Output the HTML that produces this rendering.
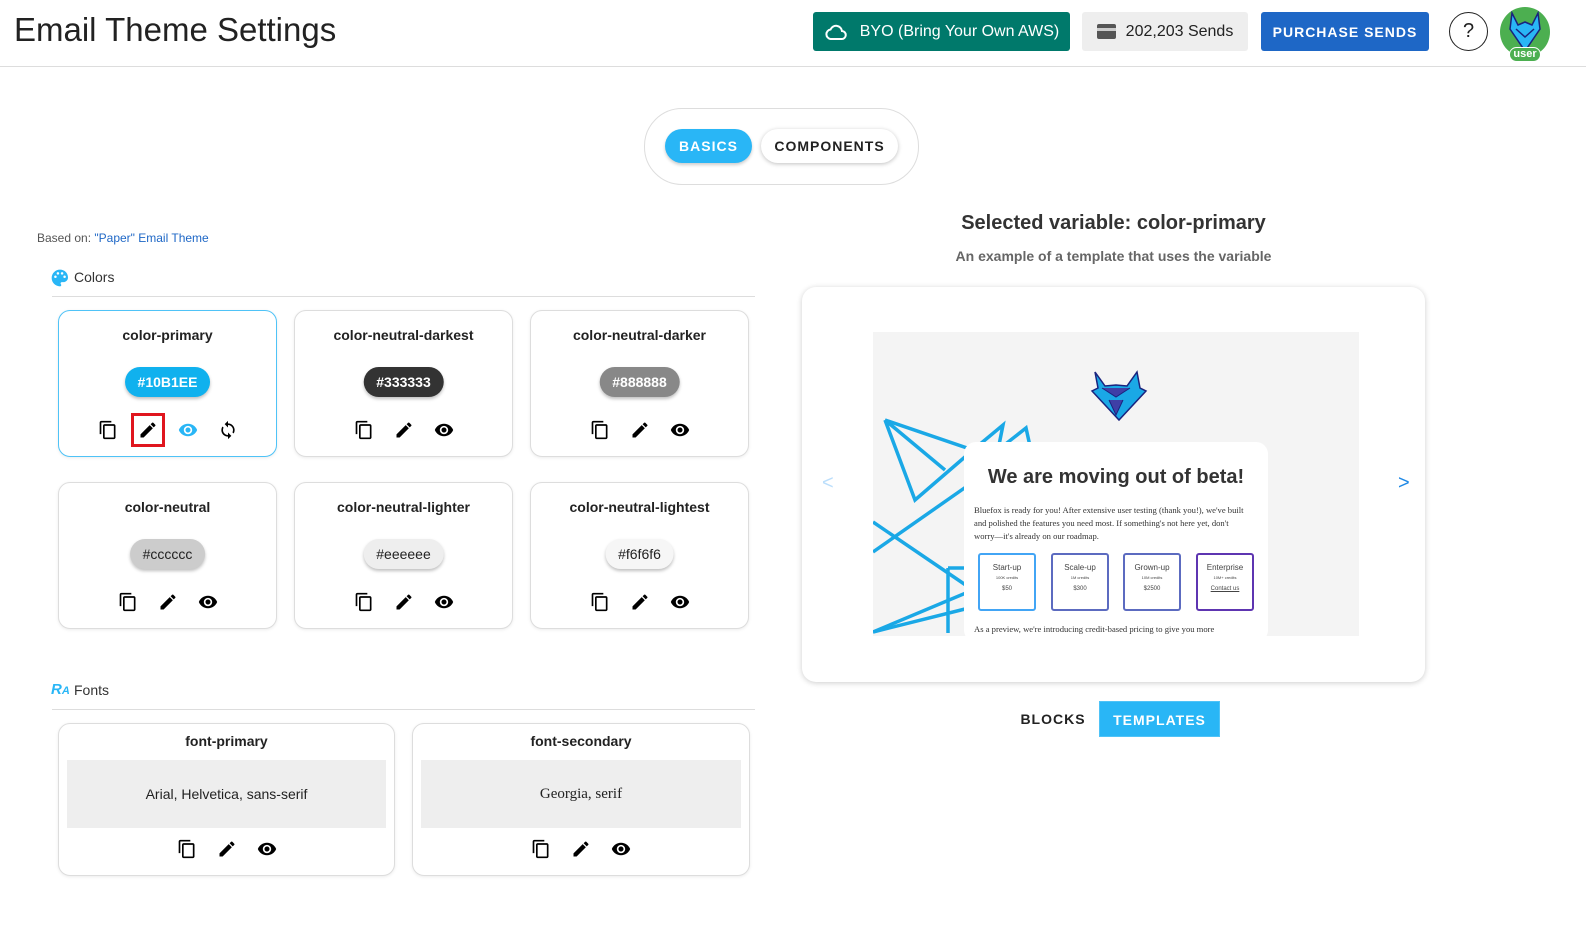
<!DOCTYPE html>
<html><head><meta charset="utf-8"><style>
*{box-sizing:border-box;margin:0;padding:0}
html,body{overflow:hidden}
body{width:1586px;height:932px;background:#fff;font-family:"Liberation Sans",Roboto,sans-serif;color:#222;position:relative}
.a{position:absolute}
.card{position:absolute;border:1px solid #ddd;border-radius:12px;background:#fff;box-shadow:0 1px 3px rgba(0,0,0,.08)}
.card .t{position:absolute;top:16px;left:0;right:0;text-align:center;font-weight:bold;font-size:14px;color:#222}
.chip{position:absolute;top:56px;left:50%;transform:translateX(-50%);height:30px;line-height:30px;padding:0 13px;border-radius:15px;font-size:14px;font-weight:bold;box-shadow:0 2px 3px rgba(0,0,0,.25)}
.icons{position:absolute;top:109px;left:0;right:0;display:flex;justify-content:center;gap:20px}
.icons svg{width:20px;height:20px}
.btn{position:absolute;top:12px;height:39px;border-radius:3px;font-size:16px;display:flex;align-items:center;justify-content:center}
</style></head><body>
<svg width="0" height="0" style="position:absolute"><defs>
<symbol id="cp" viewBox="0 0 24 24"><path d="M16 1H4c-1.1 0-2 .9-2 2v14h2V3h12V1zm3 4H8c-1.1 0-2 .9-2 2v14c0 1.1.9 2 2 2h11c1.1 0 2-.9 2-2V7c0-1.1-.9-2-2-2zm0 16H8V7h11v14z"/></symbol>
<symbol id="ed" viewBox="0 0 24 24"><path d="M3 17.25V21h3.75L17.81 9.94l-3.75-3.75L3 17.25zM20.71 7.04a1 1 0 000-1.41l-2.34-2.34a1 1 0 00-1.41 0l-1.830 1.83 3.75 3.75 1.83-1.83z"/></symbol>
<symbol id="ey" viewBox="0 0 24 24"><path d="M12 4.5C7 4.5 2.73 7.61 1 12c1.73 4.39 6 7.5 11 7.5s9.27-3.11 11-7.5c-1.730-4.39-6-7.5-11-7.5zM12 17c-2.76 0-5-2.24-5-5s2.24-5 5-5 5 2.24 5 5-2.24 5-5 5zm0-8c-1.66 0-3 1.34-3 3s1.34 3 3 3 3-1.34 3-3-1.34-3-3-3z"/></symbol>
<symbol id="sy" viewBox="0 0 24 24"><path d="M12 4V1L8 5l4 4V6c3.31 0 6 2.69 6 6 0 1.01-.25 1.97-.7 2.8l1.46 1.46A7.93 7.93 0 0020 12c0-4.42-3.58-8-8-8zm0 14c-3.31 0-6-2.69-6-6 0-1.01.25-1.97.7-2.8L5.24 7.74A7.93 7.93 0 004 12c0 4.420 3.58 8 8 8v3l4-4-4-4v3z"/></symbol>
</defs></svg>

<div class="a" style="left:14px;top:11px;font-size:33px;color:#222">Email Theme Settings</div>
<div class="btn" style="left:813px;width:257px;background:#00796b;color:#fff"><svg width="24" height="24" viewBox="0 0 24 24" style="margin-right:12px"><path fill="none" stroke="#fff" stroke-width="2" d="M6.5 19h11a4 4 0 00.5-8 6 6 0 00-11.5-1.5A4.8 4.8 0 006.5 19z"/></svg>BYO (Bring Your Own AWS)</div>
<div class="btn" style="left:1082px;width:166px;background:#eee;color:#222"><span style="display:inline-block;width:19px;height:15px;background:#555;border-radius:2px;margin-right:10px;border-top:4px solid #555;box-shadow:inset 0 3px 0 #ccc"></span>202,203 Sends</div>
<div class="btn" style="left:1261px;width:168px;background:#1e67c6;color:#fff;font-weight:bold;font-size:14px;letter-spacing:1px">PURCHASE SENDS</div>
<div class="a" style="left:1449px;top:12px;width:39px;height:39px;border:1.5px solid #222;border-radius:50%;text-align:center;line-height:37px;font-size:20px">?</div>
<div class="a" style="left:1500px;top:7px;width:50px;height:50px;border-radius:50%;background:#4caf50;overflow:hidden">
<svg width="50" height="50" viewBox="0 0 50 50"><path d="M12 6l6 12 7-3 7 3 6-12 2 16-15 22-15-22z" fill="#29b6f6" stroke="#1a237e" stroke-width="1.5"/><path d="M16 22l9 8 9-8" fill="none" stroke="#1a237e" stroke-width="1.5"/></svg></div>
<div class="a" style="left:1509px;top:47px;width:32px;height:15px;background:#4caf50;border:1px solid #fff;border-radius:8px;color:#fff;font-size:11px;font-weight:bold;text-align:center;line-height:13px">user</div>
<div class="a" style="left:0;top:66px;width:1586px;height:1px;background:#ddd"></div>

<div class="a" style="left:644px;top:108px;width:275px;height:77px;border:1px solid #ddd;border-radius:38px"></div>
<div class="a" style="left:665px;top:129px;width:87px;height:34px;border-radius:17px;background:#29b6f6;color:#fff;font-weight:bold;font-size:14px;letter-spacing:1px;text-align:center;line-height:34px;box-shadow:0 2px 3px rgba(0,0,0,.2)">BASICS</div>
<div class="a" style="left:761px;top:129px;width:137px;height:34px;border-radius:17px;background:#fff;color:#222;font-weight:bold;font-size:14px;letter-spacing:1px;text-align:center;line-height:34px;box-shadow:0 1px 4px rgba(0,0,0,.25)">COMPONENTS</div>

<div class="a" style="left:37px;top:231px;font-size:12px;color:#555">Based on: <span style="color:#1e67c6">"Paper" Email Theme</span></div>
<svg class="a" style="left:50px;top:268px" width="20" height="20" viewBox="0 0 24 24"><path fill="#29b6f6" d="M12 2C6.5 2 2 6.5 2 12s4.5 10 10 10c.9 0 1.5-.7 1.5-1.5 0-.4-.2-.8-.4-1-.3-.3-.4-.6-.4-1 0-.9.7-1.5 1.5-1.5H16c3.1 0 5.6-2.5 5.6-5.6C21.6 6 17.3 2 12 2zm-5.5 10a1.5 1.5 0 110-3 1.5 1.5 0 010 3zm3-4a1.5 1.5 0 110-3 1.5 1.5 0 010 3zm5 0a1.5 1.5 0 110-3 1.5 1.5 0 010 3zm3 4a1.5 1.5 0 110-3 1.5 1.5 0 010 3z"/></svg>
<div class="a" style="left:74px;top:269px;font-size:14px;color:#333">Colors</div>
<div class="a" style="left:52px;top:296px;width:703px;height:1px;background:#ddd"></div>

<div class="card" style="left:58px;top:310px;width:219px;height:147px;border-color:#4fc3f7"><div class="t">color-primary</div><div class="chip" style="background:#10b1ee;color:#fff">#10B1EE</div>
<div class="icons"><svg><use href="#cp"/></svg><span style="outline:3px solid #e0161e;outline-offset:4px;display:flex"><svg><use href="#ed"/></svg></span><svg fill="#29b6f6"><use href="#ey"/></svg><svg><use href="#sy"/></svg></div></div>
<div class="card" style="left:294px;top:310px;width:219px;height:147px"><div class="t">color-neutral-darkest</div><div class="chip" style="background:#333;color:#fff">#333333</div><div class="icons"><svg><use href="#cp"/></svg><svg><use href="#ed"/></svg><svg><use href="#ey"/></svg></div></div>
<div class="card" style="left:530px;top:310px;width:219px;height:147px"><div class="t">color-neutral-darker</div><div class="chip" style="background:#888;color:#fff">#888888</div><div class="icons"><svg><use href="#cp"/></svg><svg><use href="#ed"/></svg><svg><use href="#ey"/></svg></div></div>
<div class="card" style="left:58px;top:482px;width:219px;height:147px"><div class="t">color-neutral</div><div class="chip" style="background:#ccc;color:#222;font-weight:normal">#cccccc</div><div class="icons"><svg><use href="#cp"/></svg><svg><use href="#ed"/></svg><svg><use href="#ey"/></svg></div></div>
<div class="card" style="left:294px;top:482px;width:219px;height:147px"><div class="t">color-neutral-lighter</div><div class="chip" style="background:#eee;color:#222;font-weight:normal">#eeeeee</div><div class="icons"><svg><use href="#cp"/></svg><svg><use href="#ed"/></svg><svg><use href="#ey"/></svg></div></div>
<div class="card" style="left:530px;top:482px;width:219px;height:147px"><div class="t">color-neutral-lightest</div><div class="chip" style="background:#f6f6f6;color:#222;font-weight:normal">#f6f6f6</div><div class="icons"><svg><use href="#cp"/></svg><svg><use href="#ed"/></svg><svg><use href="#ey"/></svg></div></div>

<div class="a" style="left:51px;top:681px;font-size:15px;font-weight:bold;font-style:italic;color:#29b6f6">R<span style="font-size:11px">A</span></div>
<div class="a" style="left:74px;top:682px;font-size:14px;color:#333">Fonts</div>
<div class="a" style="left:52px;top:709px;width:703px;height:1px;background:#ddd"></div>
<div class="card" style="left:58px;top:723px;width:337px;height:153px"><div class="t" style="top:9px">font-primary</div><div class="a" style="left:8px;right:8px;top:36px;height:68px;background:#eee;text-align:center;line-height:68px;font-size:14px">Arial, Helvetica, sans-serif</div><div class="icons" style="top:115px"><svg><use href="#cp"/></svg><svg><use href="#ed"/></svg><svg><use href="#ey"/></svg></div></div>
<div class="card" style="left:412px;top:723px;width:338px;height:153px"><div class="t" style="top:9px">font-secondary</div><div class="a" style="left:8px;right:8px;top:36px;height:68px;background:#eee;text-align:center;line-height:68px;font-size:15px;font-family:'Liberation Serif',serif">Georgia, serif</div><div class="icons" style="top:115px"><svg><use href="#cp"/></svg><svg><use href="#ed"/></svg><svg><use href="#ey"/></svg></div></div>

<div class="a" style="left:802px;top:212px;width:623px;text-align:center;font-size:20px;font-weight:bold;color:#333">Selected variable: color-primary</div>
<div class="a" style="left:802px;top:248px;width:623px;text-align:center;font-size:14px;font-weight:bold;color:#666">An example of a template that uses the variable</div>
<div class="a" style="left:802px;top:287px;width:623px;height:395px;border-radius:14px;background:#fff;box-shadow:0 1px 6px rgba(0,0,0,.2)"></div>
<div class="a" style="left:822px;top:472px;color:#bbdefb;font-size:20px">&lt;</div>
<div class="a" style="left:1398px;top:472px;color:#1e88e5;font-size:20px">&gt;</div>
<div class="a" style="left:873px;top:332px;width:486px;height:304px;background:#f4f4f4;overflow:hidden">
<svg class="a" style="left:0;top:0" width="486" height="304" viewBox="0 0 486 304"><g fill="none" stroke="#1aa8e6" stroke-width="3.5"><path d="M12 88l88 30 30-25-5 25 28-22 4 18"/><path d="M12 88l30 80 58-50"/><path d="M12 88l60 50"/><path d="M100 118v140L0 300"/><path d="M100 258L0 190"/><path d="M0 220l100-70"/><path d="M75 236v65M75 236h30M0 300l100-25"/></g>
<path d="M222 40l10 14 11-1 11 1 10-14 3 16 6 3-27 29-27-29 6-3z" fill="#1aa8e6" stroke="#1a237e" stroke-width="1.5"/><path d="M229 56l14 9 14-9M236 68l7 15 7-15" fill="#3f3fa6" stroke="#1a237e" stroke-width="1"/></svg>
<div class="a" style="left:91px;top:110px;width:304px;height:200px;background:#fff;border-radius:12px"></div>
<div class="a" style="left:91px;top:134px;width:304px;text-align:center;font-size:20px;font-weight:bold;color:#333">We are moving out of beta!</div>
<div class="a" style="left:101px;top:172px;width:275px;font-size:8.6px;line-height:13px;font-family:'Liberation Serif',serif;color:#333">Bluefox is ready for you! After extensive user testing (thank you!), we've built and polished the features you need most. If something's not here yet, don't worry—it's already on our roadmap.</div>
<div class="a" style="left:105px;top:221px;width:58px;height:58px;border:2px solid #42a5f5;border-radius:3px;text-align:center;font-size:8px;color:#444;padding-top:8px">Start-up<br><span style="font-size:4px">100K credits</span><br><span style="font-size:6px;line-height:16px">$50</span></div>
<div class="a" style="left:178px;top:221px;width:58px;height:58px;border:2px solid #5c6bc0;border-radius:3px;text-align:center;font-size:8px;color:#444;padding-top:8px">Scale-up<br><span style="font-size:4px">1M credits</span><br><span style="font-size:6px;line-height:16px">$300</span></div>
<div class="a" style="left:250px;top:221px;width:58px;height:58px;border:2px solid #5c6bc0;border-radius:3px;text-align:center;font-size:8px;color:#444;padding-top:8px">Grown-up<br><span style="font-size:4px">10M credits</span><br><span style="font-size:6px;line-height:16px">$2500</span></div>
<div class="a" style="left:323px;top:221px;width:58px;height:58px;border:2px solid #5e35b1;border-radius:3px;text-align:center;font-size:8px;color:#444;padding-top:8px">Enterprise<br><span style="font-size:4px">10M+ credits</span><br><span style="font-size:6px;line-height:16px;text-decoration:underline">Contact us</span></div>
<div class="a" style="left:101px;top:292px;width:300px;font-size:8.6px;font-family:'Liberation Serif',serif;color:#333;white-space:nowrap">As a preview, we're introducing credit-based pricing to give you more</div>
</div>
<div class="a" style="left:1014px;top:701px;width:78px;height:36px;line-height:36px;text-align:center;font-size:14px;font-weight:bold;letter-spacing:1px;color:#222">BLOCKS</div>
<div class="a" style="left:1099px;top:701px;width:121px;height:36px;line-height:36px;text-align:center;font-size:14px;font-weight:bold;letter-spacing:1px;color:#fff;background:#29b6f6;border:1px solid #4fc3f7">TEMPLATES</div>
</body></html>
